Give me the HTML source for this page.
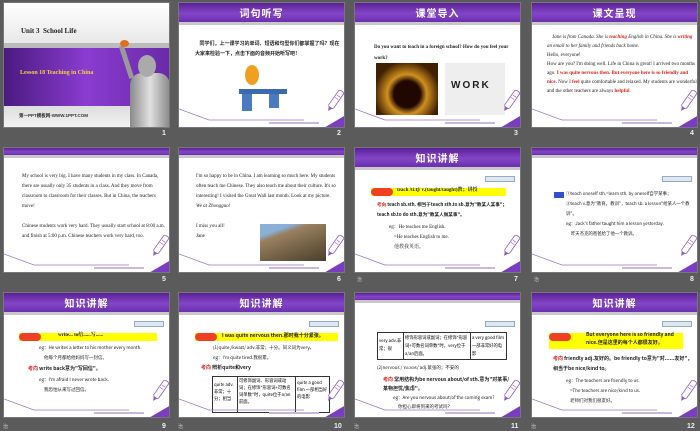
<!DOCTYPE html>
<html><head><meta charset="utf-8"><style>
*{margin:0;padding:0;box-sizing:border-box}
body{width:700px;height:431px;background:#5b5b5b;position:relative;overflow:hidden;font-family:"Liberation Serif","Noto Serif CJK SC",serif}
.s{position:absolute;width:167px;height:126px;background:#fff;overflow:hidden;border:1px solid #777}
.h{position:absolute;left:0;top:0;width:100%;height:22px;background:linear-gradient(180deg,#5a2196,#8446c8 55%,#6a2eae);border-bottom:3px solid #c8c8c8}
.h b{display:block;text-align:center;color:#fff;font:bold 10px/20px "Noto Sans CJK SC",sans-serif;letter-spacing:1px}
.hs{height:10px}
.n{position:absolute;color:#eee;font:bold 7px "Liberation Sans",sans-serif}
.z{position:absolute;color:#ccc;font:5px "Noto Sans CJK SC",sans-serif}
.t{position:absolute;font-size:5px;line-height:10px;color:#222}
.r{color:#e0201c;font-weight:bold}
.tag{position:absolute;right:5px;top:28px;width:30px;height:6px;background:#dde8f5;border:1px solid #9ab}
.kp{position:absolute;height:8px;background:#ffff00}
.kp i{position:absolute;left:0;top:0;width:22px;height:8px;background:#f04020;border-radius:4px}
.cn{font-family:"Noto Sans CJK SC",sans-serif}
.f{position:absolute;left:0;top:0;width:167px;height:126px;pointer-events:none}
</style></head><body>

<svg width="0" height="0" style="position:absolute"><defs>
<g id="ft">
<polyline points="0,106 30,117 125,117" fill="none" stroke="#9a7ac0" stroke-width="0.8"/>
<polygon points="167,112 167,126 143,126" fill="#7a3cc0"/>
<g transform="translate(156,98) rotate(35)"><rect x="-3" y="-12" width="6" height="20" rx="2" fill="#fff" stroke="#8a5ac8" stroke-width="0.8"/><line x1="-2" y1="-6" x2="2" y2="-6" stroke="#8a5ac8" stroke-width="0.6"/><line x1="-2" y1="-3" x2="2" y2="-3" stroke="#8a5ac8" stroke-width="0.6"/><polygon points="-2,8 2,8 0,12" fill="#8a5ac8"/></g>
<rect x="90" y="119" width="50" height="2" fill="#c8b8e0"/>
</g></defs></svg>

<!-- slide 1 -->
<div class="s" style="left:3px;top:2px;background:#f2f2f2">
<div style="position:absolute;left:0;top:0;width:100%;height:40px;background:linear-gradient(#fff,#e8e8e8)"></div>
<div style="position:absolute;left:17px;top:24px;font:bold 7px 'Liberation Serif';color:#222">Unit 3&nbsp; School Life</div>
<div style="position:absolute;left:0;top:40px;width:100%;height:5px;background:#bbb"></div>
<div style="position:absolute;left:0;top:45px;width:100%;height:58px;background:linear-gradient(90deg,#4a1a80,#8a3cd0 50%,#6a2aa8)"></div>
<div style="position:absolute;left:16px;top:67px;font:bold 6px 'Liberation Serif';color:#f5d040">Lesson 18 Teaching in China</div>
<div style="position:absolute;left:0;top:103px;width:100%;height:23px;background:linear-gradient(#ddd,#f5f5f5)"></div>
<div style="position:absolute;left:15px;top:110px;font:bold 4.5px 'Liberation Sans';color:#333">第一PPT模板网-WWW.1PPT.COM</div>
<div style="position:absolute;left:126px;top:70px;width:40px;height:60px;background:linear-gradient(90deg,#8a8a8a,#e0e0e0,#888);border-radius:12px 12px 0 0"></div>
<div style="position:absolute;left:134px;top:52px;width:18px;height:22px;background:#aaa;border-radius:50%"></div>
<div style="position:absolute;left:120px;top:42px;width:5px;height:34px;background:#999;transform:rotate(-18deg)"></div>
<div style="position:absolute;left:116px;top:37px;width:9px;height:7px;background:#e07020;border-radius:50%"></div>
</div>
<div class="n" style="left:162px;top:130px">1</div>

<!-- slide 2 -->
<div class="s" style="left:178px;top:2px">
<div class="h"><b>词句听写</b></div>
<div class="t cn" style="left:16px;top:36px;width:145px;font-weight:bold;font-size:5px;line-height:10px">&nbsp;&nbsp;&nbsp;&nbsp;同学们，上一课学习的单词、短语和句型你们都掌握了吗？现在大家来检验一下，点击下面的音频开始听写吧！</div>
<div style="position:absolute;left:66px;top:62px;width:14px;height:20px;background:#f0a020;border-radius:50%"></div>
<div style="position:absolute;left:60px;top:86px;width:48px;height:5px;background:#3a6ab0"></div>
<div style="position:absolute;left:63px;top:91px;width:10px;height:17px;background:#4a7ac0"></div>
<div style="position:absolute;left:90px;top:91px;width:10px;height:14px;background:#4a7ac0"></div>
<svg class="f"><use href="#ft"/></svg>
</div>
<div class="n" style="left:337px;top:130px">2</div>

<!-- slide 3 -->
<div class="s" style="left:354px;top:2px">
<div class="h"><b>课堂导入</b></div>
<div class="t" style="left:19px;top:39px;width:140px;font-weight:bold;line-height:11px">Do you want to teach in a foreign school? How do you feel your work?</div>
<div style="position:absolute;left:21px;top:60px;width:62px;height:52px;background:radial-gradient(ellipse at 50% 60%,#200800 30%,#d09020 45%,#402000 75%)"></div>
<div style="position:absolute;left:90px;top:60px;width:60px;height:52px;background:#eee"></div>
<div style="position:absolute;left:96px;top:77px;font:bold 10px 'Liberation Sans';color:#222;letter-spacing:2px">WORK</div>
<svg class="f"><use href="#ft"/></svg>
</div>
<div class="n" style="left:514px;top:130px">3</div>

<!-- slide 4 -->
<div class="s" style="left:531px;top:2px">
<div class="h"><b>课文呈现</b></div>
<div class="t" style="left:15px;top:30px;width:150px;line-height:9px;font-size:5px"><i>&nbsp;&nbsp;&nbsp;&nbsp;Jane is from Canada. She is <span class="r">teaching</span> English in China. She is <span class="r">writing</span> an email to her family and friends back home.</i><br>Hello, everyone!<br>How are you? I'm doing well. Life in China is great! I arrived two months ago. <span class="r">I was quite nervous then. But everyone here is so friendly and nice.</span> Now I <span class="r">feel</span> quite comfortable and relaxed. My students are wonderful and the other teachers are always <span class="r">helpful</span>.</div>
<svg class="f"><use href="#ft"/></svg>
</div>
<div class="n" style="left:690px;top:130px">4</div>

<!-- slide 5 -->
<div class="s" style="left:3px;top:147px">
<div class="h hs"></div>
<div class="t" style="left:18px;top:24px;width:145px">My school is very big. I have many students in my class. In Canada, there are usually only 35 students in a class. And they move from classroom to classroom for their classes. But in China, the teachers move!<br><br>Chinese students work very hard. They usually start school at 8:00 a.m. and finish at 5:00 p.m. Chinese teachers work very hard, too.</div>
<svg class="f"><use href="#ft"/></svg>
</div>
<div class="n" style="left:162px;top:276px">5</div>

<!-- slide 6 -->
<div class="s" style="left:178px;top:147px">
<div class="h hs"></div>
<div class="t" style="left:17px;top:24px;width:145px">I'm so happy to be in China. I am learning so much here. My students often teach me Chinese. They also teach me about their culture. It's so interesting! I visited the Great Wall last month. Look at my picture.<br><i>We at Zhongguo!</i><br><br>I miss you all!<br>Jane</div>
<div style="position:absolute;left:81px;top:76px;width:66px;height:37px;background:linear-gradient(160deg,#8ab0d8 20%,#9a8060 30%,#6a5a40 70%,#4a4030)"></div>
<svg class="f"><use href="#ft"/></svg>
</div>
<div class="n" style="left:337px;top:276px">6</div>

<!-- slide 7 -->
<div class="s" style="left:354px;top:147px">
<div class="h"><b>知识讲解</b></div>
<div class="tag"></div>
<div class="kp" style="left:16px;top:40px;width:135px"><i></i></div>
<div class="t" style="left:42px;top:38px;font-weight:bold">teach /ti:tʃ/ v.(taught/taught)教；讲授</div>
<div class="t cn" style="left:22px;top:52px;width:140px;font-weight:bold;font-size:4.6px"><span class="r">考向</span> teach sb.sth. 相当于teach sth.to sb.意为"教某人某事"；teach sb.to do sth.意为"教某人做某事"。</div>
<div class="t" style="left:34px;top:75px;line-height:10px">eg：He teaches me English.<br>&nbsp;&nbsp;&nbsp;&nbsp;=He teaches English to me.<br>&nbsp;&nbsp;&nbsp;&nbsp;他教我英语。</div>
<svg class="f"><use href="#ft"/></svg>
</div>
<div class="z" style="left:357px;top:276px">治</div>
<div class="n" style="left:514px;top:276px">7</div>

<!-- slide 8 -->
<div class="s" style="left:531px;top:147px">
<div class="h hs"></div>
<div class="tag" style="top:28px"></div>
<div style="position:absolute;left:22px;top:44px;width:10px;height:6px;background:#3050d0"></div>
<div class="t cn" style="left:34px;top:41px;width:128px;font-size:4.4px">①teach oneself sth.=learn sth. by oneself自学某事；<br>②teach v.意为"教育，教训"，teach sb. a lesson"给某人一个教训"。<br>eg：Jack's father taught him a lesson yesterday.<br>&nbsp;&nbsp;&nbsp;&nbsp;&nbsp;昨天杰克的爸爸给了他一个教训。</div>
<svg class="f"><use href="#ft"/></svg>
</div>
<div class="z" style="left:534px;top:276px">治</div>
<div class="n" style="left:690px;top:276px">8</div>

<!-- slide 9 -->
<div class="s" style="left:3px;top:292px">
<div class="h"><b>知识讲解</b></div>
<div class="tag"></div>
<div class="kp" style="left:15px;top:40px;width:138px"><i></i></div>
<div class="t" style="left:54px;top:38px;font-weight:bold">write... to给......写......</div>
<div class="t cn" style="left:35px;top:50px;font-size:4.5px">eg：He writes a letter to his mother every month.<br>&nbsp;&nbsp;&nbsp;&nbsp;&nbsp;他每个月都给他妈妈写一封信。</div>
<div class="t cn" style="left:24px;top:71px;font-weight:bold"><span class="r">考向</span> write back意为"写回信"。</div>
<div class="t cn" style="left:35px;top:82px;font-size:4.5px">eg：I'm afraid I never wrote back.<br>&nbsp;&nbsp;&nbsp;&nbsp;&nbsp;我恐怕从来写过回信。</div>
<svg class="f"><use href="#ft"/></svg>
</div>
<div class="z" style="left:3px;top:423px">治</div>
<div class="n" style="left:162px;top:423px">9</div>

<!-- slide 10 -->
<div class="s" style="left:178px;top:292px">
<div class="h"><b>知识讲解</b></div>
<div class="tag"></div>
<div class="kp" style="left:16px;top:40px;width:143px"><i></i></div>
<div class="t cn" style="left:43px;top:38px;font-weight:bold">I was quite nervous then.那时我十分紧张。</div>
<div class="t cn" style="left:34px;top:50px;font-size:4.5px">(1)quite /kwaɪt/ adv.非常；十分。同义词为very。<br>eg：I'm quite tired.我很累。</div>
<div class="t cn" style="left:22px;top:70px;font-weight:bold"><span class="r">考向</span> 辨析quite和very</div>
<div style="position:absolute;left:33px;top:83px;width:118px;height:37px;border:1px solid #333;display:flex;font:4.3px/7px 'Noto Sans CJK SC',sans-serif;background:#fff">
<div style="width:25px;border-right:1px solid #333;padding:5px 1px">quite adv.非常；十分；相当</div>
<div style="width:58px;border-right:1px solid #333;padding:1px">可修饰副词、形容词或动词；在修饰"形容词+可数名词单数"时，quite位于a/an前面。</div>
<div style="flex:1;padding:3px 1px">quite a good film 一部相当好的电影</div>
</div>
<svg class="f"><use href="#ft"/></svg>
</div>
<div class="z" style="left:178px;top:423px">治</div>
<div class="n" style="left:334px;top:423px">10</div>

<!-- slide 11 -->
<div class="s" style="left:354px;top:292px">
<div class="h hs"></div>
<div class="tag" style="top:28px"></div>
<div style="position:absolute;left:22px;top:39px;width:130px;height:28px;border:1px solid #333;display:flex;font:4.3px/8px 'Noto Sans CJK SC',sans-serif">
<div style="width:26px;border-right:1px solid #333;padding:4px 1px">very adv.非常；很</div>
<div style="width:67px;border-right:1px solid #333;padding:1px">修饰形容词或副词；在修饰"形容词+可数名词单数"时，very位于a/an后面。</div>
<div style="flex:1;padding:1px">a very good film 一部非常好的电影</div>
</div>
<div class="t cn" style="left:22px;top:70px;font-size:4.5px">(2)nervous /ˈnɜ:vəs/ adj.紧张的；不安的</div>
<div class="t cn" style="left:28px;top:82px;width:130px;font-weight:bold;line-height:9px"><span class="r">考向</span> 常用结构为be nervous about/of sth.意为"对某事/某物担忧/焦虑"。</div>
<div class="t cn" style="left:38px;top:101px;font-size:4.5px;line-height:9px">eg：Are you nervous about/of the coming exam?<br>&nbsp;&nbsp;&nbsp;&nbsp;&nbsp;你担心即将到来的考试吗？</div>
<svg class="f"><use href="#ft"/></svg>
</div>
<div class="z" style="left:354px;top:423px">治</div>
<div class="n" style="left:511px;top:423px">11</div>

<!-- slide 12 -->
<div class="s" style="left:531px;top:292px">
<div class="h"><b>知识讲解</b></div>
<div class="tag"></div>
<div class="kp" style="left:17px;top:40px;width:134px;height:16px"><i></i></div>
<div class="t cn" style="left:54px;top:38px;width:95px;font-weight:bold;line-height:8px">But everyone here is so friendly and nice.但是这里的每个人都很友好。</div>
<div class="t cn" style="left:21px;top:61px;width:140px;font-weight:bold;line-height:10px"><span class="r">考向</span> friendly adj.友好的。be friendly to意为"对......友好"，相当于be nice/kind to。</div>
<div class="t cn" style="left:34px;top:83px;font-size:4.5px">eg：The teachers are friendly to us.<br>&nbsp;&nbsp;&nbsp;&nbsp;=The teachers are nice/kind to us.<br>&nbsp;&nbsp;&nbsp;&nbsp;老师们对我们很友好。</div>
<svg class="f"><use href="#ft"/></svg>
</div>
<div class="z" style="left:531px;top:423px">治</div>
<div class="n" style="left:687px;top:423px">12</div>

</body></html>
